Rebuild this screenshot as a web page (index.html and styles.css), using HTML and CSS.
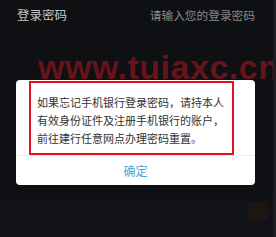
FILE: index.html
```html
<!DOCTYPE html>
<html lang="zh-CN">
<head>
<meta charset="utf-8">
<link rel="stylesheet" href="styles.css">
</head>
<body>
<div class="screen">
  <div class="row">
    <span class="label">登录密码</span>
    <span class="placeholder">请输入您的登录密码</span>
  </div>
  <div class="watermark">www.tuiaxc.cn</div>
  <div class="dialog">
    <div class="msg">
      <p>如果忘记手机银行登录密码，请持本人</p>
      <p>有效身份证件及注册手机银行的账户，</p>
      <p>前往建行任意网点办理密码重置。</p>
    </div>
    <div class="ok">确定</div>
  </div>
  <div class="bottom">
    <span class="dimtext">登录</span>
    <span class="dimbox"></span>
  </div>
  <div class="edge"></div>
</div>
</body>
</html>
```
FILE: styles.css
```css
html, body {
  margin: 0;
  padding: 0;
  background: #0e1014;
}
.screen {
  position: relative;
  width: 276px;
  height: 237px;
  overflow: hidden;
  background: #0e1014;
  font-family: "Noto Sans CJK SC", "Noto Sans", sans-serif;
  display: flex;
  flex-direction: column;
}
.row {
  height: 29px;
  padding: 0 21px 0 17px;
  display: flex;
  justify-content: space-between;
  align-items: center;
}
.label {
  font-size: 12.5px;
  color: #c6c6c6;
}
.placeholder {
  font-size: 11.7px;
  color: #8a8a8a;
}
.watermark {
  position: absolute;
  left: 38px;
  top: 50px;
  font-family: "Liberation Sans", Arial, sans-serif;
  font-weight: bold;
  font-size: 34px;
  line-height: 34px;
  color: #661419;
  white-space: nowrap;
  letter-spacing: 0.5px;
}
.dialog {
  position: relative;
  z-index: 1;
  margin: 51px 21px 0 16px;
  height: 105px;
  background: #ffffff;
  border-radius: 4px;
  display: flex;
  flex-direction: column;
}
.msg {
  margin: 1px 21px 0 13px;
  border: 2px solid #e3131c;
  padding: 10px 0 6px 6px;
}
.msg p {
  margin: 0;
  font-size: 11px;
  line-height: 18px;
  color: #333333;
  white-space: nowrap;
}
.ok {
  flex: 1;
  border-top: 1px solid #ececec;
  display: flex;
  align-items: center;
  justify-content: center;
  font-size: 12px;
  color: #4aa6d6;
}
.bottom {
  margin-top: 10px;
  flex: 1;
  background: #111217;
  display: flex;
  align-items: center;
  justify-content: space-between;
  padding: 0 8px 0 92px;
}
.dimtext {
  font-size: 12px;
  color: #15161b;
  margin-top: 14px;
}
.dimbox {
  width: 20px;
  height: 18px;
  background: #1c1512;
  margin-top: -10px;
}
.edge {
  position: absolute;
  right: 0;
  top: 0;
  width: 3px;
  height: 237px;
  background: #1d1e22;
}
```
